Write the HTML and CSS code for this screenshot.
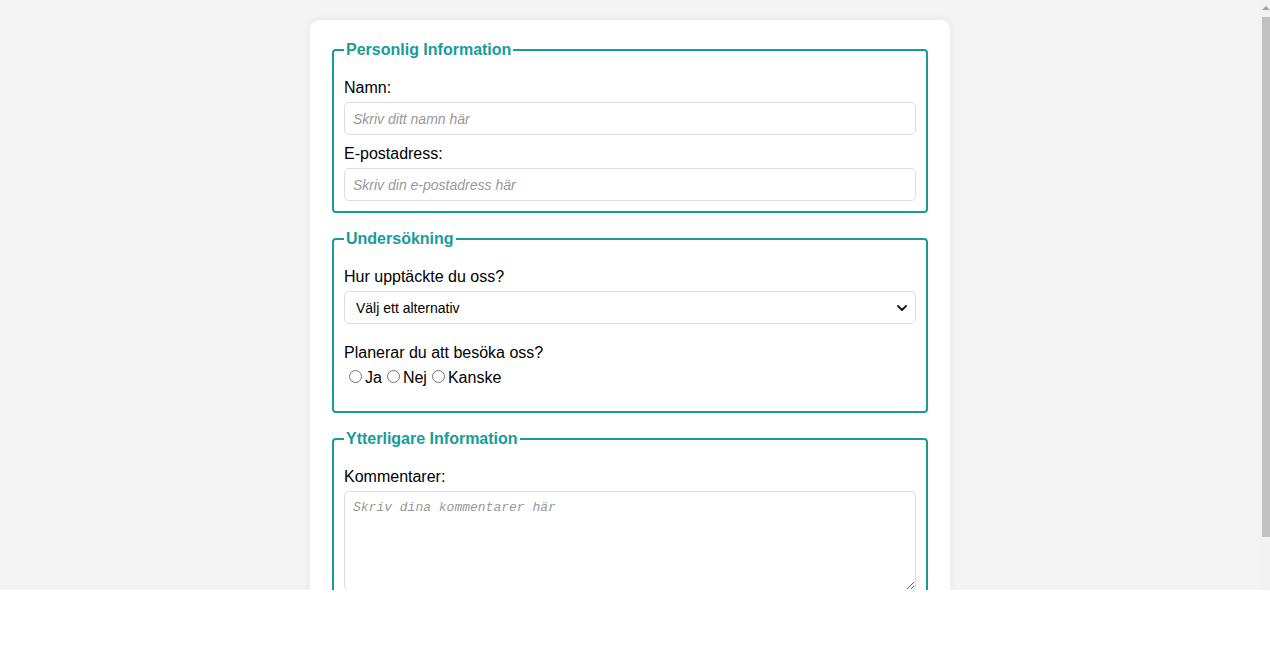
FILE: index.html
```html
<!DOCTYPE html>
<html lang="sv">

<head>
    <meta charset="UTF-8">
    <meta name="viewport" content="width=device-width, initial-scale=1.0">
    <title>Besöksenkät</title>
    <link rel="stylesheet" href="styles.css">
</head>

<body>
    <div class="page">
        <div class="content">
            <div class="container">
                <form>
                    <fieldset>
                        <legend>Personlig Information</legend>
                        <label for="namn">Namn:</label>
                        <input type="text" id="namn" placeholder="Skriv ditt namn här">

                        <label for="epost">E-postadress:</label>
                        <input type="email" id="epost" placeholder="Skriv din e-postadress här">
                    </fieldset>

                    <fieldset>
                        <legend>Undersökning</legend>
                        <label for="kalla">Hur upptäckte du oss?</label>
                        <div class="select-wrap">
                            <select id="kalla">
                                <option value="">Välj ett alternativ</option>
                                <option value="sok">Sökmotor</option>
                                <option value="vanner">Vänner</option>
                                <option value="sociala">Sociala medier</option>
                            </select>
                            <svg class="chevron" width="10" height="6" viewBox="0 0 10 6">
                                <path d="M1 1l4 4 4-4" fill="none" stroke="#111" stroke-width="1.8" stroke-linecap="round" stroke-linejoin="round"/>
                            </svg>
                        </div>

                        <label class="group-label">Planerar du att besöka oss?</label>
                        <div class="radio-row"><input type="radio" id="ja" name="besok" value="ja"><label for="ja">Ja</label><input type="radio" id="nej" name="besok" value="nej"><label for="nej">Nej</label><input type="radio" id="kanske" name="besok" value="kanske"><label for="kanske">Kanske</label></div>
                    </fieldset>

                    <fieldset>
                        <legend>Ytterligare Information</legend>
                        <label for="kommentar">Kommentarer:</label>
                        <textarea id="kommentar" rows="6" placeholder="Skriv dina kommentarer här"></textarea>
                    </fieldset>
                </form>
            </div>
        </div>
        <!-- page scrollbar -->
        <div class="scrollbar">
            <div class="scroll-up"></div>
            <div class="scroll-thumb"></div>
        </div>
    </div>
</body>

</html>
```

FILE: styles.css
```css
html, body {
    margin: 0;
    padding: 0;
    background-color: #fff;
}

body {
    font-family: "Liberation Sans", Arial, sans-serif;
    color: #000;
}

/* the visible page area */
.page {
    display: flex;
    height: 590px;
    background-color: #f4f4f4;
}

.content {
    flex: 1;
    overflow: hidden;
}

.scrollbar {
    width: 10px;
    background-color: #f2f2f2;
    display: flex;
    flex-direction: column;
    align-items: flex-end;
}

.scroll-up {
    margin: 6px 0 0;
    width: 0;
    height: 0;
    border-left: 4px solid transparent;
    border-right: 4px solid transparent;
    border-bottom: 4px solid #a3a3a3;
}

.scroll-thumb {
    margin-top: 7px;
    width: 8px;
    height: 520px;
    background-color: #c1c1c1;
}

.container {
    width: 600px;
    margin: 20px auto;
    background-color: #fff;
    padding: 21px 20px 20px;
    border-radius: 10px;
    box-shadow: 0 0 10px rgba(0, 0, 0, 0.06);
}

fieldset {
    border: 2px solid #179c97;
    border-radius: 4px;
    margin: 0 2px 17px;
    padding: 0 10px 10px;
}

legend {
    color: #179c97;
    font-weight: bold;
    font-size: 16px;
    padding: 0 2px;
}

label {
    display: block;
    font-size: 16px;
    margin: 10px 0 5px;
}

fieldset > label:first-of-type {
    margin-top: 20px;
}

input[type="text"],
input[type="email"],
select,
textarea {
    display: block;
    width: 100%;
    box-sizing: border-box;
    padding: 8px;
    border: 1px solid #ddd;
    border-radius: 5px;
    font-size: 14px;
    font-family: "Liberation Sans", Arial, sans-serif;
}

input[type="text"],
input[type="email"] {
    height: 33px;
}

input::placeholder {
    color: #999;
    font-style: italic;
}

.select-wrap {
    position: relative;
    margin-bottom: 20px;
}

select {
    appearance: none;
    height: 33px;
    padding: 0 30px 0 11px;
    background-color: #fff;
    color: #000;
}

.chevron {
    position: absolute;
    right: 9px;
    top: 14px;
    pointer-events: none;
}

textarea {
    height: 100px;
    font-family: "Liberation Mono", monospace;
    font-size: 13px;
}

textarea::placeholder {
    color: #999;
    font-style: italic;
}

.group-label {
    margin-top: 0;
}

.radio-row {
    font-size: 16px;
    margin-bottom: 14px;
}

.radio-row input[type="radio"] {
    width: 13px;
    height: 13px;
    margin: 3px 3px 0 5px;
}

.radio-row label {
    display: inline;
    margin: 0;
}
```
